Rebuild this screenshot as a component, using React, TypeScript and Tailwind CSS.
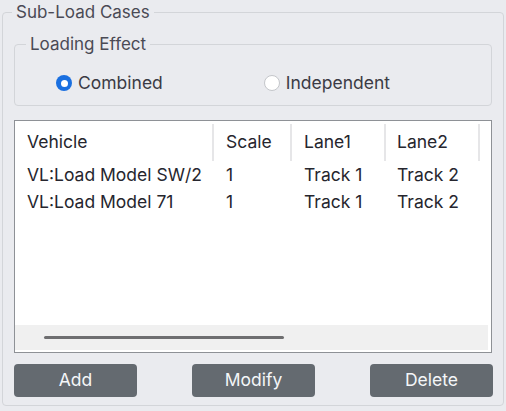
import { useState } from 'react';

const rows = [
  { vehicle: 'VL:Load Model SW/2', scale: '1', lane1: 'Track 1', lane2: 'Track 2' },
  { vehicle: 'VL:Load Model 71', scale: '1', lane1: 'Track 1', lane2: 'Track 2' },
];

const Radio = ({ checked, label, onClick }: { checked: boolean; label: string; onClick: () => void }) => (
  <button type="button" onClick={onClick} className="flex items-center gap-[6px] h-6">
    {checked ? (
      <span className="w-[16px] h-[16px] rounded-full bg-[#1a6fe0] flex items-center justify-center">
        <span className="w-[7px] h-[7px] rounded-full bg-white" />
      </span>
    ) : (
      <span className="w-[16px] h-[16px] rounded-full bg-white border border-[#c4c6ca]" />
    )}
    <span>{label}</span>
  </button>
);

export default function App() {
  const [effect, setEffect] = useState('combined');
  return (
    <div className="w-[506px] h-[411px] bg-[#eaebef] text-[17.5px] text-[#3b3b45] pl-[2px] pr-[2px]" style={{ fontFamily: 'Inter, "Noto Sans", sans-serif' }}>
      <fieldset className="w-[502px] h-[406px] border border-[#d3d5d9] rounded-[4px] pl-[11px] pr-[10px] pb-[9px]">
        <legend className="ml-[-2px] px-1 leading-6 text-[17px] text-[#4a4a55]">Sub-Load Cases</legend>
        <div className="pt-2">
          <fieldset className="w-[478px] border border-[#d3d5d9] rounded-[4px] pl-[14px] pt-[15px] pb-[10px]">
            <legend className="ml-[-3px] px-1 leading-6 text-[17px] text-[#4a4a55]">Loading Effect</legend>
            <div className="flex items-center pl-[27px] gap-[101px]">
              <Radio checked={effect === 'combined'} label="Combined" onClick={() => setEffect('combined')} />
              <Radio checked={effect === 'independent'} label="Independent" onClick={() => setEffect('independent')} />
            </div>
          </fieldset>
        </div>

        <div className="mt-[14px] w-[478px] h-[233px] bg-white border border-[#8e9196] flex flex-col text-[#26262e]">
          <div className="grid grid-cols-[199px_78px_94px_94px_1fr] h-[41px]">
            {['Vehicle', 'Scale', 'Lane1', 'Lane2', ''].map((h, i) => (
              <div key={i} className={`mt-[3px] h-[37px] flex items-center ${i < 4 ? 'border-r-2 border-[#e6e6e8]' : ''} ${i === 3 ? 'pl-[11px]' : 'pl-[12px]'}`}>
                {h}
              </div>
            ))}
          </div>
          {rows.map((r, i) => (
            <div key={i} className="grid grid-cols-[199px_78px_94px_94px_1fr] h-[27px] items-center">
              <div className="pl-[12px]">{r.vehicle}</div>
              <div className="pl-[12px]">{r.scale}</div>
              <div className="pl-[12px]">{r.lane1}</div>
              <div className="pl-[11px]">{r.lane2}</div>
              <div />
            </div>
          ))}
          <div className="flex-1" />
          <div className="h-[25px] bg-[#f0f0f0] mr-[3px] mb-[2px] flex items-center pl-[29px]">
            <div className="w-[240px] h-[3px] rounded-full bg-[#6e6e70]" />
          </div>
        </div>

        <div className="mt-[11px] w-[479px] flex justify-between">
          {['Add', 'Modify', 'Delete'].map(b => (
            <button key={b} type="button" className="w-[123px] h-[33px] rounded-[4px] bg-[#646a70] text-[#f4f6f8]">
              {b}
            </button>
          ))}
        </div>
      </fieldset>
    </div>
  );
}
